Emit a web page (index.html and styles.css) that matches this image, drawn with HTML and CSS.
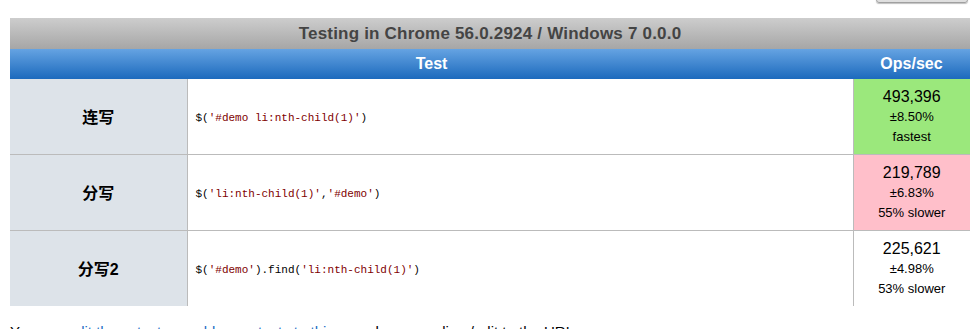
FILE: index.html
```html
<!DOCTYPE html>
<html lang="zh-CN">
<head>
    <meta charset="UTF-8">
    <meta name="viewport" content="width=device-width, initial-scale=1.0">
    <title>jsPerf 测试结果</title>
    <link rel="stylesheet" href="styles.css">
</head>
<body>
    <div class="topbar">
        <button class="btn-run" type="button" aria-label="Run tests"></button>
    </div>

    <table class="results">
        <caption>Testing in Chrome 56.0.2924 / Windows 7 0.0.0</caption>
        <colgroup>
            <col class="col-label">
            <col>
            <col class="col-ops">
        </colgroup>
        <thead>
            <tr>
                <th colspan="2">Test</th>
                <th>Ops/sec</th>
            </tr>
        </thead>
        <tbody>
            <tr>
                <th class="label">连写</th>
                <td class="code"><code>$(<span class="str">'#demo li:nth-child(1)'</span>)</code></td>
                <td class="ops fastest">
                    <span class="hz">493,396</span>
                    <small>±8.50%</small>
                    <small>fastest</small>
                </td>
            </tr>
            <tr>
                <th class="label">分写</th>
                <td class="code"><code>$(<span class="str">'li:nth-child(1)'</span>,<span class="str">'#demo'</span>)</code></td>
                <td class="ops slowest">
                    <span class="hz">219,789</span>
                    <small>±6.83%</small>
                    <small>55% slower</small>
                </td>
            </tr>
            <tr>
                <th class="label">分写2</th>
                <td class="code"><code>$(<span class="str">'#demo'</span>).find(<span class="str">'li:nth-child(1)'</span>)</code></td>
                <td class="ops">
                    <span class="hz">225,621</span>
                    <small>±4.98%</small>
                    <small>53% slower</small>
                </td>
            </tr>
        </tbody>
    </table>

    <p class="note">You can <a href="#">edit these tests or add more tests to this page</a> by appending /edit to the URL.</p>
</body>
</html>
```

FILE: styles.css
```css
/* Reset básico */
* {
    margin: 0;
    padding: 0;
    box-sizing: border-box;
}

body {
    font-family: 'Liberation Sans', Arial, 'Noto Sans CJK SC', sans-serif;
    color: #000;
    background: #fff;
    overflow: hidden;
}

.topbar {
    height: 18px;
    display: flex;
    justify-content: flex-end;
    padding-right: 12px;
}

.btn-run {
    width: 92px;
    height: 30px;
    margin-top: -27px;
    border: 1px solid #a0a0a0;
    border-radius: 3px;
    background: linear-gradient(#f4f4f4, #dedede);
    box-shadow: 0 1px 1px rgba(0, 0, 0, 0.25);
}

.results {
    margin-left: 10px;
    width: 960px;
    border-collapse: collapse;
    table-layout: fixed;
}

.col-label {
    width: 177px;
}

.col-ops {
    width: 117px;
}

.results caption {
    height: 31px;
    line-height: 31px;
    background: linear-gradient(#cdcdcd, #a6a6a6);
    color: #444;
    font-weight: bold;
    font-size: 17px;
    letter-spacing: 0.2px;
}

.results thead th {
    height: 30px;
    background: linear-gradient(#65a3e2, #1c6abd);
    color: #fff;
    font-size: 16px;
    font-weight: bold;
    text-align: center;
}

.results tbody tr {
    height: 76px;
    border-top: 1px solid #bbb;
}

.results tbody tr:first-child {
    border-top: none;
    height: 75px;
}

.label {
    background: #dde3e9;
    border-right: 1px solid #bbb;
    font-size: 16px;
    font-weight: bold;
    text-align: center;
}

.code {
    padding-left: 8px;
}

.code code {
    font-family: 'Liberation Mono', 'Courier New', monospace;
    font-size: 11px;
}

.str {
    color: #800000;
}

.ops {
    border-left: 1px solid #bbb;
    text-align: center;
    vertical-align: top;
    padding-top: 7px;
}

.ops .hz {
    display: block;
    font-size: 16px;
    line-height: 21px;
}

.ops small {
    display: block;
    font-size: 13px;
    line-height: 20px;
}

.ops.fastest {
    background: #9be87c;
}

.ops.slowest {
    background: #ffbfca;
}

.note {
    margin: 17px 0 0 10px;
    font-size: 15px;
    white-space: nowrap;
}

.note a {
    color: #1a6cc4;
    text-decoration: none;
}
```
